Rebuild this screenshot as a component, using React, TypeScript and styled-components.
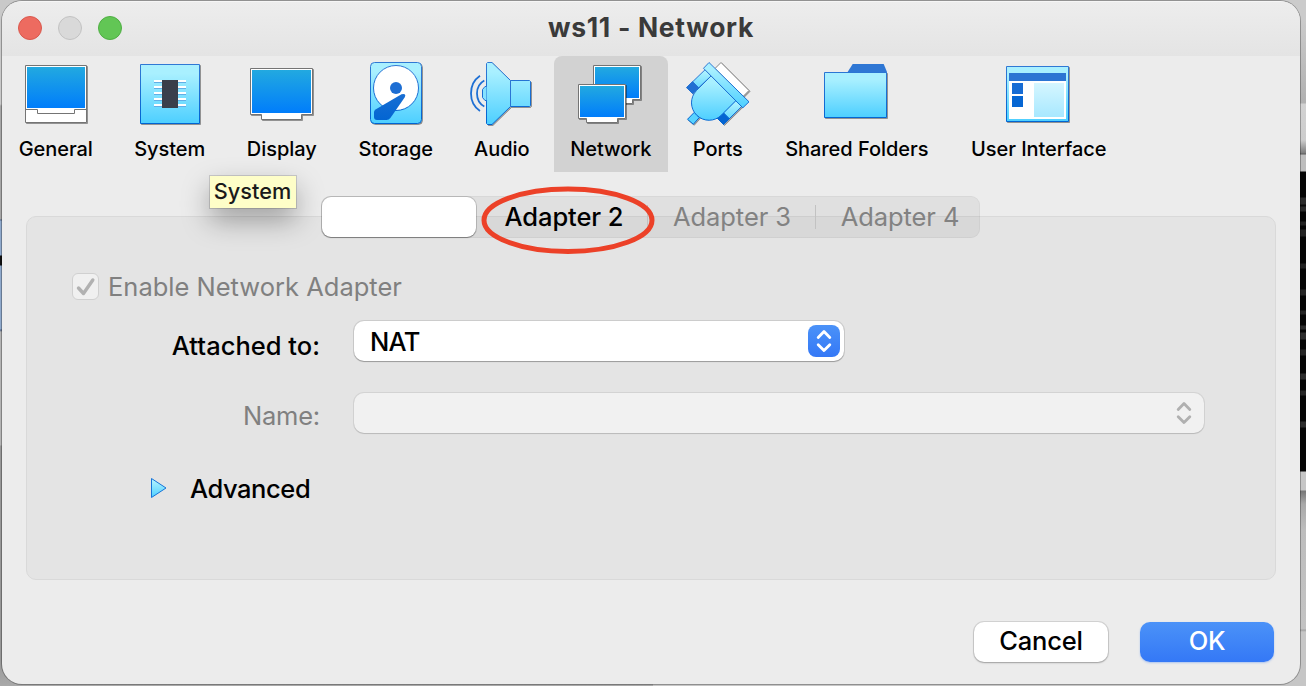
import React from 'react';
import styled, { createGlobalStyle, css } from 'styled-components';

const GlobalStyle = createGlobalStyle`
  * { box-sizing: border-box; }
  html, body { margin: 0; padding: 0; }
  body { overflow: hidden; font-family: Inter, "Liberation Sans", sans-serif; color: #000; }
  button { font: inherit; color: inherit; border: 0; margin: 0; padding: 0; background: none; }
`;

const Desktop = styled.div`
  width: 1306px;
  height: 686px;
  padding: 1px 6px 2px 2px;
  background:
    linear-gradient(180deg, #cbcbcb 0 20px, #b0b0b0 103px, #d2d2d2 104px, #cdcdcd 140px, #7c7c7c 153px,
      #5a5a5a 154px, #bdbdbd 155px 171px, #050505 172px 197px, #2c2c2c 198px 204px, #0a0a0a 205px 206px,
      #2a2a2a 207px 211px, #050505 212px 221px, #222 222px 225px, #050505 226px 229px, #242424 230px 236px,
      #050505 237px 263px, #222 264px 268px, #050505 269px 289px, #262626 290px 295px, #050505 296px 310px,
      #242424 311px 314px, #050505 315px 325px, #2c2c2c 326px 329px, #050505 330px 332px, #2c2c2c 333px 339px,
      #050505 340px 349px, #262626 350px 355px, #050505 356px 373px, #2c2c2c 374px 379px, #050505 380px 390px,
      #262626 391px 395px, #050505 396px 421px, #2c2c2c 422px 427px, #050505 428px 471px,
      #c6c6c6 472px 490px, #777 491px,
      #a8a8a8 504px, #bdbdbd 530px, #c3c3c3 629px, #a0a0a0 630px, #c6c6c6 632px 686px) right / 653px 686px no-repeat,
    linear-gradient(180deg, #c9c9c9 0 104px, #a6a6a6 106px 219px, #54688a 220px, #8fa9cc 221px 255px,
      #111 256px 265px, #8fa9cc 266px 329px, #54688a 330px, #b4b4b4 332px 445px, #989898 446px 660px,
      #a9a9a9 686px) left / 653px 686px no-repeat,
    #a2a2a2;
`;

const Window = styled.main`
  position: relative;
  height: 683px;
  display: flex;
  flex-direction: column;
  border-radius: 20px;
  background: #ececec;
  box-shadow: 0 0 0 1px rgba(0, 0, 0, 0.28);
  overflow: hidden;
`;

const TitleBar = styled.header`
  flex: none;
  height: 55px;
  padding-bottom: 2px;
  display: grid;
  grid-template-columns: 1fr auto 1fr;
  align-items: center;
  background: linear-gradient(#ededed, #e4e4e4);
  border-top: 1px solid #f6f6f6;
`;

const TrafficLights = styled.div`
  display: flex;
  gap: 16px;
  padding-left: 16px;
`;

const Light = styled.span<{ $fill: string; $edge: string }>`
  width: 24px;
  height: 24px;
  border-radius: 50%;
  background: ${p => p.$fill};
  border: 1px solid ${p => p.$edge};
`;

const Title = styled.h1`
  margin: 0;
  padding-bottom: 2px;
  font-size: 26.5px;
  line-height: 30px;
  font-weight: 700;
  letter-spacing: 0.7px;
  color: #3a3a3a;
  white-space: nowrap;
`;

const Toolbar = styled.nav`
  flex: none;
  height: 116px;
  display: flex;
`;

const Tool = styled.button<{ $width: number; $active?: boolean; $gap?: number }>`
  width: ${p => p.$width}px;
  margin-left: ${p => p.$gap ?? 0}px;
  padding-top: 4px;
  display: flex;
  flex-direction: column;
  align-items: center;
  ${p => p.$active && css`
    background: #d2d2d2;
    border-radius: 8px 8px 0 0;
  `}
`;

const ToolIcon = styled.svg`
  width: 80px;
  height: 70px;
  flex: none;
`;

const ToolLabel = styled.span`
  margin-top: 7px;
  padding-right: 0.5px;
  font-size: 20px;
  line-height: 24px;
  font-weight: 530;
  letter-spacing: -0.05px;
  white-space: nowrap;
`;

const Panel = styled.section`
  flex: none;
  margin: 44px 24px 0;
  height: 364px;
  border: 1px solid #d9d9d9;
  border-radius: 10px;
  background: #e4e4e4;
`;

const Tabs = styled.div`
  position: relative;
  display: flex;
  width: 659px;
  height: 42px;
  margin: -21px 0 0 294px;
  border-radius: 9px;
  background: linear-gradient(rgba(0, 0, 0, 0.05), rgba(0, 0, 0, 0.055));
  box-shadow: inset 0 0 0 1px rgba(0, 0, 0, 0.035);
`;

const Tab = styled.button<{ $width: number; $divider?: boolean; $enabled?: boolean }>`
  position: relative;
  flex: none;
  width: ${p => p.$width}px;
  font-size: 25.5px;
  font-weight: ${p => (p.$enabled ? 450 : 430)};
  letter-spacing: -0.08px;
  line-height: 42px;
  color: ${p => (p.$enabled ? '#000' : '#828282')};
  white-space: nowrap;
  &::after {
    content: '';
    position: absolute;
    right: 0;
    top: 9px;
    width: 1px;
    height: 24px;
    background: ${p => (p.$divider ? '#c2c2c2' : 'transparent')};
  }
`;

const SelectedTab = styled.button`
  flex: none;
  width: 154px;
  margin: 1px 4px 1px 1px;
  border-radius: 9px;
  background: #fff;
  box-shadow: 0 0 0 1px rgba(0, 0, 0, 0.15), 0 1px 1px rgba(0, 0, 0, 0.3);
`;

const EnableRow = styled.label`
  display: flex;
  align-items: center;
  gap: 9px;
  height: 30px;
  margin: 33px 0 0 45px;
  color: #808080;
`;

const CheckBox = styled.span`
  width: 27px;
  height: 27px;
  border: 1px solid #d0d0d0;
  border-radius: 6px;
  background: #f0f0f0;
  display: flex;
`;

const Text = styled.span<{ $spacing?: number; $weight?: number; $drop?: number }>`
  padding-top: ${p => p.$drop ?? 0}px;
  font-size: 25.5px;
  line-height: 30px;
  font-weight: ${p => p.$weight ?? 430};
  letter-spacing: ${p => p.$spacing ?? 0}px;
  white-space: nowrap;
`;

const Field = styled.div<{ $top: number; $muted?: boolean }>`
  display: grid;
  grid-template-columns: 293px auto;
  column-gap: 34px;
  justify-content: start;
  align-items: center;
  height: 40px;
  margin-top: ${p => p.$top}px;
  color: ${p => (p.$muted ? '#808080' : '#000')};
`;

const FieldLabel = styled.span<{ $drop: number }>`
  padding-top: ${p => p.$drop}px;
  text-align: right;
`;

const Select = styled.div<{ $width: number; $disabled?: boolean }>`
  width: ${p => p.$width}px;
  height: 40px;
  padding: 0 4px 0 16px;
  display: flex;
  align-items: center;
  justify-content: space-between;
  border-radius: 10px;
  background: ${p => (p.$disabled ? '#f1f1f1' : '#fff')};
  box-shadow: 0 0 0 1px rgba(0, 0, 0, ${p => (p.$disabled ? 0.07 : 0.1)}),
    0 1px 1px rgba(0, 0, 0, ${p => (p.$disabled ? 0.12 : 0.25)});
`;

const Stepper = styled.span<{ $disabled?: boolean }>`
  width: 32px;
  height: 32px;
  border-radius: 8px;
  background: ${p => (p.$disabled ? 'none' : 'linear-gradient(#4b92f8, #3478f6)')};
  color: ${p => (p.$disabled ? '#b0b0b0' : '#fff')};
`;

const AdvancedRow = styled.div`
  display: flex;
  align-items: center;
  height: 30px;
  margin: 40px 0 0 123px;
  gap: 22px;
`;

const Footer = styled.footer`
  display: flex;
  justify-content: flex-end;
  gap: 32px;
  padding: 42px 26px 0 0;
`;

const PushButton = styled.button<{ $primary?: boolean }>`
  width: 134px;
  height: 40px;
  padding-bottom: 2px;
  border-radius: 10px;
  font-size: 25.5px;
  font-weight: 500;
  line-height: 38px;
  letter-spacing: -0.2px;
  color: ${p => (p.$primary ? '#fff' : '#000')};
  background: ${p => (p.$primary ? 'linear-gradient(#4b92f8, #3478f6)' : '#fff')};
  box-shadow: ${p => (p.$primary
    ? '0 1px 2px rgba(52, 120, 246, 0.35)'
    : '0 0 0 1px rgba(0, 0, 0, 0.1), 0 1px 2px rgba(0, 0, 0, 0.25)')};
`;

const Tooltip = styled.div`
  position: absolute;
  left: 208px;
  top: 175px;
  width: 86px;
  height: 32px;
  padding-right: 1px;
  background: #fefec8;
  box-shadow: 0 0 0 1px rgba(0, 0, 0, 0.14), 0 12px 28px rgba(0, 0, 0, 0.34);
  font-size: 21.7px;
  font-weight: 500;
  line-height: 31px;
  color: #1a1a1a;
  text-align: center;
  white-space: nowrap;
`;

const Highlight = styled.svg`
  position: absolute;
  left: 478px;
  top: 183px;
  width: 176px;
  height: 72px;
  pointer-events: none;
`;

const GradientDefs = styled.svg`
  position: absolute;
  width: 0;
  height: 0;
`;

const Gradients = () => (
  <GradientDefs aria-hidden="true">
    <defs>
      <linearGradient id="screen" x1="0" y1="0" x2="0" y2="1">
        <stop offset="0" stopColor="#22a9e0" />
        <stop offset="1" stopColor="#007dfb" />
      </linearGradient>
      <linearGradient id="sky" x1="0" y1="0" x2="0" y2="1">
        <stop offset="0.15" stopColor="#a9f0ff" />
        <stop offset="1" stopColor="#4dcfff" />
      </linearGradient>
      <linearGradient id="pale" x1="0" y1="0" x2="0" y2="1">
        <stop offset="0" stopColor="#d5f6ff" />
        <stop offset="1" stopColor="#a8e8ff" />
      </linearGradient>
      <linearGradient id="edge" x1="0" y1="0" x2="0" y2="70" gradientUnits="userSpaceOnUse">
        <stop offset="0.1" stopColor="#3078d4" />
        <stop offset="0.9" stopColor="#0064d2" />
      </linearGradient>
    </defs>
  </GradientDefs>
);

const SHADOW = 'rgba(0,0,0,0.28)';

const Shaded = ({ d, fill, stroke }: { d: string; fill: string; stroke: string }) => (
  <>
    <path d={d} transform="translate(1 1)" fill={SHADOW} />
    <path d={d} transform="translate(1 1)" fill="none" stroke={SHADOW} />
    <path d={d} fill={fill} stroke={stroke} strokeLinejoin="round" />
  </>
);

const GeneralIcon = () => (
  <ToolIcon viewBox="0 0 80 70">
    <Shaded d="M9.5 5.5H70.5V62.5H9.5Z" fill="#fff" stroke="#747474" />
    <rect x="11" y="7" width="58" height="41" fill="url(#screen)" />
    <path d="M9.5 49.5H21.5V53.5H58.5V49.5H70.5" fill="none" stroke="#747474" />
  </ToolIcon>
);

const SystemIcon = () => (
  <ToolIcon viewBox="0 0 80 70">
    <Shaded d="M10.5 4.5H69.5V63.5H10.5Z" fill="url(#sky)" stroke="url(#edge)" />
    {[20, 26, 32, 38, 44].map(y => (
      <g key={y}>
        <rect x="24" y={y} width="32" height="2" fill="#fff" />
        <rect x="24" y={y + 2} width="32" height="1" fill="#62aee6" />
      </g>
    ))}
    <rect x="32" y="20" width="16" height="28" fill="#3a3f4b" />
  </ToolIcon>
);

const DisplayIcon = () => (
  <ToolIcon viewBox="0 0 80 70">
    <Shaded d="M8.5 8.5H70.5V54.5H59.5V59.5H19.5V54.5H8.5Z" fill="#fff" stroke="#747474" />
    <rect x="10" y="10" width="59" height="43" fill="url(#screen)" />
  </ToolIcon>
);

const StorageIcon = () => (
  <ToolIcon viewBox="0 0 80 70">
    <Shaded
      d="M18.5 2.5H61.5Q65.5 2.5 65.5 6.5V59.5Q65.5 63.5 61.5 63.5H18.5Q14.5 63.5 14.5 59.5V6.5Q14.5 2.5 18.5 2.5Z"
      fill="url(#sky)"
      stroke="url(#edge)"
    />
    <circle cx="40" cy="28" r="22.5" fill="#fff" stroke="url(#edge)" />
    <circle cx="40" cy="28" r="6" fill="#1d6ed3" />
    <path
      d="M45.5 34.2L19.5 49.4Q18 50.4 18 52V57Q18 60 21 60H30.5Q33 60 34.4 58L48.6 37.6Q50.4 34 47.5 34Z"
      fill="url(#edge)"
    />
  </ToolIcon>
);

const AudioIcon = () => (
  <ToolIcon viewBox="0 0 80 70">
    <Shaded
      d="M24.5 3.5L25.5 2.5H30L48.5 20.5H67.5L68.5 21.5V45.5L67.5 46.5H48.5L30 64.5H25.5L24.5 63.5Z"
      fill="url(#sky)"
      stroke="url(#edge)"
    />
    <path d="M48.5 20.5V46.5" stroke="#2a74d4" />
    <path d="M24.5 26.5H23L20.5 29.5V37.5L23 40.5H24.5" fill="#86e2ff" stroke="url(#edge)" />
    <path d="M22.3 20.5Q15 24.5 15 33.5T22.3 46.5" fill="none" stroke="#1f70d4" strokeWidth="1.8" />
    <path d="M18 15.8Q9 22 9 33.5T18 51" fill="none" stroke="#1f70d4" strokeWidth="1.8" />
  </ToolIcon>
);

const NetworkIcon = () => (
  <ToolIcon viewBox="0 0 80 70">
    <Shaded d="M22.5 5.5H69.5V39.5H61.5V43.5H30.5V39.5H22.5Z" fill="#fff" stroke="#747474" />
    <rect x="24" y="7" width="44" height="31" fill="url(#screen)" />
    <Shaded d="M7.5 24.5H54.5V58.5H46.5V62.5H15.5V58.5H7.5Z" fill="#fff" stroke="#747474" />
    <rect x="9" y="26" width="44" height="31" fill="url(#screen)" />
  </ToolIcon>
);

const PortsIcon = () => (
  <ToolIcon viewBox="0 0 80 70">
    <Shaded d="M43 2.5L71 30.5L65 36.5L37 8.5Z" fill="#fff" stroke="#858585" />
    <Shaded d="M27.3 9.5L8.7 27.5L14.7 33.5L33 16Z" fill="url(#sky)" stroke="url(#edge)" />
    <path d="M14.6 21.7L8.7 27.5L14.7 33.5L20.6 27.7Z" fill="#216fd2" stroke="#216fd2" />
    <Shaded d="M57.7 40.5L63.7 46.5L45.5 64.5L39.5 58.5Z" fill="url(#sky)" stroke="url(#edge)" />
    <path d="M45.4 52.7L51.4 58.7L45.5 64.5L39.5 58.5Z" fill="#0465d2" stroke="#0465d2" />
    <Shaded d="M16.3 52.3L21.3 57.5L15.3 64.3L9.5 59.3Z" fill="#58d3ff" stroke="url(#edge)" />
    <path
      d="M33 16L58 40.5L43.5 55A17.5 17.5 0 0 1 18.5 30.5Z"
      fill="url(#sky)"
      stroke="url(#edge)"
      strokeLinejoin="round"
    />
    <path
      d="M31 2.5L71 41.8L64.8 47.8L25.5 8.3Z"
      fill="url(#sky)"
      stroke="url(#edge)"
      strokeLinejoin="round"
    />
  </ToolIcon>
);

const FoldersIcon = () => (
  <ToolIcon viewBox="0 0 80 70">
    <path d="M30 13L35.7 4H66.7L70 12V13Z" fill="#2f77d4" />
    <Shaded d="M7.5 12.5H69.5V57.5H7.5Z" fill="url(#sky)" stroke="url(#edge)" />
  </ToolIcon>
);

const InterfaceIcon = () => (
  <ToolIcon viewBox="0 0 80 70">
    <Shaded d="M7.5 6.5H69.5V61.5H7.5Z" fill="url(#sky)" stroke="url(#edge)" />
    <rect x="10" y="13" width="57" height="46" fill="#fff" />
    <rect x="10" y="13" width="57" height="8" fill="#2c75d3" />
    <rect x="13" y="23" width="11" height="11" fill="#176cd4" />
    <rect x="13" y="36" width="11" height="11" fill="#0666d3" />
    <rect x="35" y="23" width="30" height="34" fill="url(#pale)" />
  </ToolIcon>
);

const TOOLS = [
  { label: 'General', width: 108, Icon: GeneralIcon },
  { label: 'System', width: 120, Icon: SystemIcon },
  { label: 'Display', width: 104, Icon: DisplayIcon },
  { label: 'Storage', width: 124, Icon: StorageIcon },
  { label: 'Audio', width: 88, Icon: AudioIcon },
  { label: 'Network', width: 114, Icon: NetworkIcon, active: true, gap: 8 },
  { label: 'Ports', width: 100, Icon: PortsIcon },
  { label: 'Shared Folders', width: 178, Icon: FoldersIcon },
  { label: 'User Interface', width: 186, Icon: InterfaceIcon },
];

const Chevrons = () => (
  <svg width="32" height="32" viewBox="0 0 32 32" fill="none" stroke="currentColor"
    strokeWidth="2.8" strokeLinecap="round" strokeLinejoin="round">
    <path d="M10.2 12.5L16 6.6L21.8 12.5M10.2 19.7L16 25.6L21.8 19.7" />
  </svg>
);

export default function App() {
  return (
    <Desktop>
      <GlobalStyle />
      <Gradients />
      <Window>
        <TitleBar>
          <TrafficLights>
            <Light $fill="#ed6b60" $edge="#d9584d" />
            <Light $fill="#d9d9d9" $edge="#c2c2c2" />
            <Light $fill="#62c655" $edge="#4fae43" />
          </TrafficLights>
          <Title>ws11 - Network</Title>
        </TitleBar>
        <Toolbar>
          {TOOLS.map(({ label, width, Icon, active, gap }) => (
            <Tool key={label} $width={width} $active={active} $gap={gap}>
              <Icon />
              <ToolLabel>{label}</ToolLabel>
            </Tool>
          ))}
        </Toolbar>
        <Panel>
          <Tabs>
            <SelectedTab aria-label="Adapter 1" />
            <Tab $width={168} $enabled $divider>Adapter 2</Tab>
            <Tab $width={168} $divider>Adapter 3</Tab>
            <Tab $width={168}>Adapter 4</Tab>
          </Tabs>
          <EnableRow>
            <CheckBox>
              <svg width="25" height="25" viewBox="0 0 25 25" fill="none" stroke="#b1b1b1"
                strokeWidth="3.4" strokeLinecap="round" strokeLinejoin="round">
                <path d="M5.5 14L10.5 19.5L19.8 6" />
              </svg>
            </CheckBox>
            <Text $drop={2}>Enable Network Adapter</Text>
          </EnableRow>
          <Field $top={20}>
            <FieldLabel $drop={10}><Text $weight={470} $spacing={0.02}>Attached to:</Text></FieldLabel>
            <Select $width={490}>
              <Text $weight={470} $spacing={-0.7} $drop={2}>NAT</Text>
              <Stepper><Chevrons /></Stepper>
            </Select>
          </Field>
          <Field $top={32} $muted>
            <FieldLabel $drop={6}><Text $spacing={-0.2}>Name:</Text></FieldLabel>
            <Select $width={850} $disabled>
              <span />
              <Stepper $disabled><Chevrons /></Stepper>
            </Select>
          </Field>
          <AdvancedRow>
            <svg width="18" height="22" viewBox="0 0 18 22">
              <path d="M1.5 1.5L16 11L1.5 20.5Z" fill="url(#sky)" stroke="#1673d8" strokeLinejoin="round" />
            </svg>
            <Text $weight={470} $spacing={-0.42} $drop={2}>Advanced</Text>
          </AdvancedRow>
        </Panel>
        <Footer>
          <PushButton>Cancel</PushButton>
          <PushButton $primary>OK</PushButton>
        </Footer>
        <Tooltip>System</Tooltip>
        <Highlight viewBox="0 0 176 72">
          <ellipse cx="88" cy="36.2" rx="84" ry="31.2" fill="none" stroke="#ec4128" strokeWidth="5" />
        </Highlight>
      </Window>
    </Desktop>
  );
}
